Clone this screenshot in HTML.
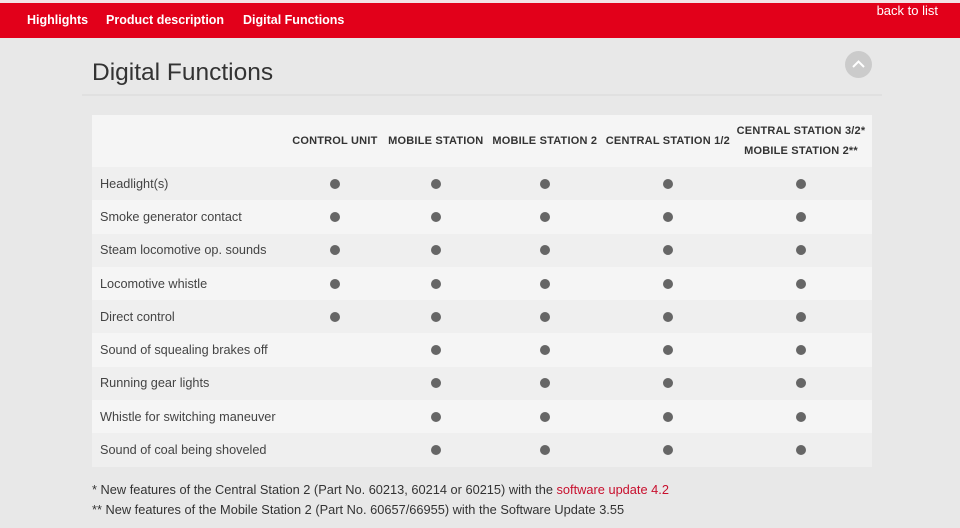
<!DOCTYPE html>
<html><head><style>
*{margin:0;padding:0;box-sizing:border-box}
body{width:960px;height:528px;background:#e8e8e8;font-family:"Liberation Sans",sans-serif;position:relative;overflow:hidden;color:#333}
.top{position:absolute;left:0;top:0;width:960px;height:3px;background:#f3e3e5}
.bar{position:absolute;left:0;top:3px;width:960px;height:35px;background:#e2001a}
.bar a{position:absolute;top:10px;color:#fff;font-weight:bold;font-size:12.5px}
.back{position:absolute;right:22px;top:0px;color:#fff;font-size:13px}
h1{position:absolute;left:92px;top:59px;font-size:24.5px;font-weight:normal;color:#333}
.line{position:absolute;left:82px;top:94px;width:800px;height:2px;background:#e0e0e0}
.up{position:absolute;left:845px;top:51px;width:27px;height:27px;border-radius:50%;background:#cbcbcb}
table{position:absolute;left:92px;top:115px;width:780px;border-collapse:collapse;font-size:12.7px}
th{height:52px;font-size:11px;font-weight:bold;color:#333;line-height:20px;letter-spacing:.2px;white-space:nowrap}
tr{background:#f5f5f5}
tr:nth-child(even){background:#efefef}
td{height:33.3px;padding:0}
td:first-child{padding-left:8px;color:#444}
.d{width:10px;height:10px;border-radius:50%;background:#666;margin:0 auto}
.f{position:absolute;left:92px;font-size:12.8px;color:#333}
.f span{color:#c8102e}
</style></head><body>
<div class="top"></div>
<div class="bar">
<a style="left:27px">Highlights</a><a style="left:106px">Product description</a><a style="left:243px">Digital Functions</a>
<div class="back">back to list</div></div>
<h1>Digital Functions</h1>
<div class="up"><svg width="27" height="27"><path d="M8 16 L13.5 10.5 L19 16" stroke="#fff" stroke-width="2" fill="none"/></svg></div>
<div class="line"></div>
<table>
<colgroup><col style="width:190px"><col style="width:106px"><col style="width:96px"><col style="width:122px"><col style="width:124px"><col style="width:142px"></colgroup>
<tr><th></th><th>CONTROL UNIT</th><th>MOBILE STATION</th><th>MOBILE STATION 2</th><th>CENTRAL STATION 1/2</th><th>CENTRAL STATION 3/2*<br>MOBILE STATION 2**</th></tr>
<tr><td>Headlight(s)</td><td><div class="d"></div></td><td><div class="d"></div></td><td><div class="d"></div></td><td><div class="d"></div></td><td><div class="d"></div></td></tr>
<tr><td>Smoke generator contact</td><td><div class="d"></div></td><td><div class="d"></div></td><td><div class="d"></div></td><td><div class="d"></div></td><td><div class="d"></div></td></tr>
<tr><td>Steam locomotive op. sounds</td><td><div class="d"></div></td><td><div class="d"></div></td><td><div class="d"></div></td><td><div class="d"></div></td><td><div class="d"></div></td></tr>
<tr><td>Locomotive whistle</td><td><div class="d"></div></td><td><div class="d"></div></td><td><div class="d"></div></td><td><div class="d"></div></td><td><div class="d"></div></td></tr>
<tr><td>Direct control</td><td><div class="d"></div></td><td><div class="d"></div></td><td><div class="d"></div></td><td><div class="d"></div></td><td><div class="d"></div></td></tr>
<tr><td>Sound of squealing brakes off</td><td></td><td><div class="d"></div></td><td><div class="d"></div></td><td><div class="d"></div></td><td><div class="d"></div></td></tr>
<tr><td>Running gear lights</td><td></td><td><div class="d"></div></td><td><div class="d"></div></td><td><div class="d"></div></td><td><div class="d"></div></td></tr>
<tr><td>Whistle for switching maneuver</td><td></td><td><div class="d"></div></td><td><div class="d"></div></td><td><div class="d"></div></td><td><div class="d"></div></td></tr>
<tr><td>Sound of coal being shoveled</td><td></td><td><div class="d"></div></td><td><div class="d"></div></td><td><div class="d"></div></td><td><div class="d"></div></td></tr>
</table>
<div class="f" style="top:482px">* New features of the Central Station 2 (Part No. 60213, 60214 or 60215) with the <span>software update 4.2</span></div>
<div class="f" style="top:502px">** New features of the Mobile Station 2 (Part No. 60657/66955) with the Software Update 3.55</div>
</body></html>
